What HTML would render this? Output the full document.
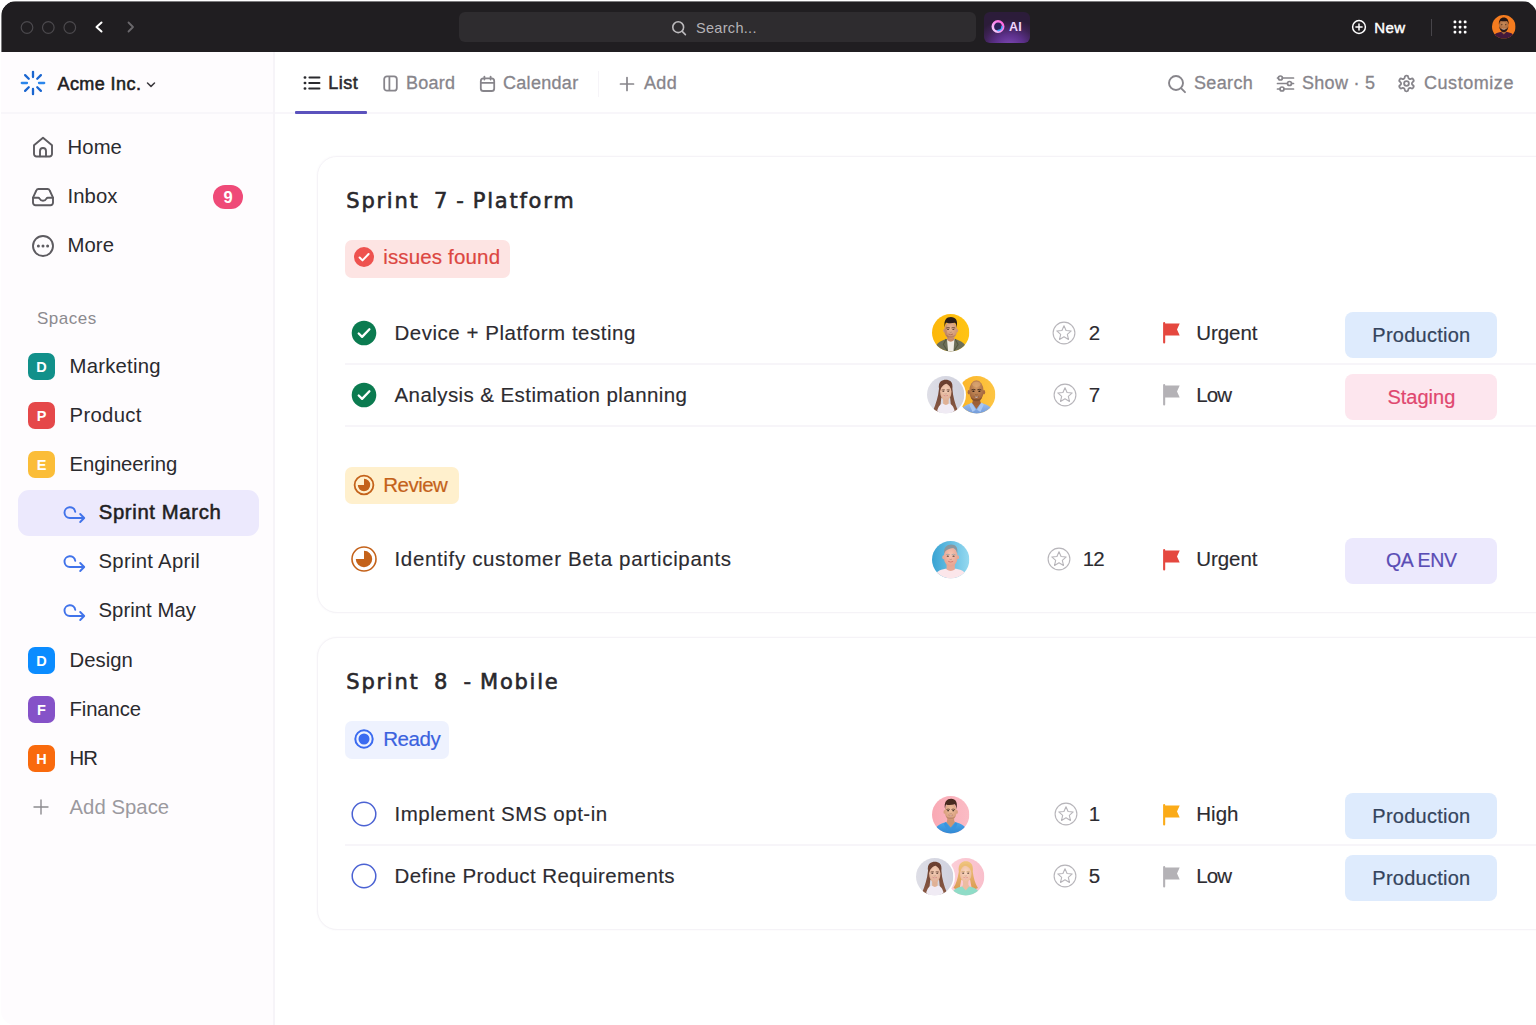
<!DOCTYPE html>
<html lang="en">
<head>
<meta charset="utf-8">
<title>Acme Inc. - Sprint March</title>
<style>
*{box-sizing:border-box;margin:0;padding:0}
html,body{width:1536px;height:1025px;overflow:hidden;background:#fff}
body{font-family:"Liberation Sans",sans-serif;color:#2a2a2e;position:relative}
.abs{position:absolute}
svg{display:block;overflow:visible}
#win{position:absolute;left:1px;top:1px;width:1540px;height:1024px;border-radius:15px 0 0 14px;overflow:hidden;background:#fff}
#winclip{position:absolute;left:0;top:0;width:1536px;height:60px;border-radius:15px 15px 0 0;overflow:hidden}
#topbar{position:absolute;left:0;top:0;width:1536px;height:51px;background:#201e21}
.t{position:absolute;white-space:pre;line-height:1}
/* top bar */
#search{position:absolute;left:458.300px;top:11.300px;width:517px;height:29.700px;border-radius:6px;background:#2e2c2f}
#ai{position:absolute;left:983px;top:11px;width:46px;height:30.500px;border-radius:6px;background:radial-gradient(ellipse 75% 85% at 55% 108%,#7c47b3 0%,#5c308a 42%,#3d2254 75%,#2c1c3a 100%)}
/* toolbar */
#toolbar{position:absolute;left:0;top:51px;width:1536px;height:62px;background:#fff;border-bottom:2px solid #f8f6fa}
#sidebar{position:absolute;left:0;top:51px;width:274px;height:980px;background:#fefcfe;border-right:2px solid #f6f4f8}
#sidehead{position:absolute;left:0;top:0;width:272px;height:62px;border-bottom:2px solid #f8f6fa}
.sb{-webkit-text-stroke:.55px currentColor}
.tb{font-size:18px;color:#87858b;letter-spacing:.35px;-webkit-text-stroke:.3px #87858b}
.nav{font-size:20.300px;color:#2a2a2e;letter-spacing:.1px}
.sq{position:absolute;left:27px;width:27px;height:27px;border-radius:7px;color:#fff;font-weight:700;font-size:14.500px;text-align:center;line-height:28.500px}
.card{position:absolute;left:316px;width:1300px;border:1px solid #f5f3f7;border-radius:20px;background:#fff;box-shadow:0 0 2px rgba(80,60,110,.05)}
</style>
</head>
<body>
<div id="win">
 <div id="winclip"><div id="topbar">
  <!-- traffic lights -->
  <svg class="abs" style="left:0;top:0" width="160" height="51" viewBox="0 0 160 51" fill="none">
   <circle cx="26" cy="26.5" r="5.8" stroke="#4b494d" stroke-width="1.2"/>
   <circle cx="47.3" cy="26.5" r="5.8" stroke="#4b494d" stroke-width="1.2"/>
   <circle cx="68.8" cy="26.5" r="5.8" stroke="#4b494d" stroke-width="1.2"/>
   <path d="M100.5 21.5 L95.5 26 L100.5 30.5" stroke="#fff" stroke-width="2" stroke-linecap="round" stroke-linejoin="round"/>
   <path d="M127.5 21.5 L132 26 L127.5 30.5" stroke="#6a686c" stroke-width="1.8" stroke-linecap="round" stroke-linejoin="round"/>
  </svg>
  <div id="edge" class="abs" style="left:0;top:0;width:1536px;height:1px;background:rgba(255,255,255,.42)"></div><div class="abs" style="left:0;top:0;width:1px;height:51px;background:rgba(255,255,255,.42)"></div>
  <div id="search"></div>
  <svg class="abs" style="left:670px;top:19px" width="16" height="16" viewBox="0 0 16 16" fill="none"><circle cx="7.2" cy="7.2" r="5.4" stroke="#bcbabd" stroke-width="1.6"/><path d="M11.2 11.4 L14.4 14.6" stroke="#bcbabd" stroke-width="1.6" stroke-linecap="round"/></svg>
  <div class="t" style="left:695px;top:20px;font-size:14.5px;color:#b4b2b6;letter-spacing:.3px">Search...</div>
  <div id="ai"></div>
  <svg class="abs" style="left:989px;top:18.400px" width="16" height="16" viewBox="0 0 16 16" fill="none">
   <defs><linearGradient id="aig" x1="0" y1="1" x2="1" y2="0"><stop offset="0" stop-color="#f5d9ff"/><stop offset=".5" stop-color="#fb8bf0"/><stop offset="1" stop-color="#ff5fd9"/></linearGradient></defs>
   <circle cx="8" cy="7.5" r="5.2" fill="#2b1f58" stroke="url(#aig)" stroke-width="2.6"/><path d="M8 11.6 A4.2 4.2 0 0 0 12.1 7.5" stroke="#3fa8ff" stroke-width="1.6" stroke-linecap="round"/>
  </svg>
  <div class="t" style="left:1008px;top:19.600px;font-size:12.500px;font-weight:700;color:#f0d6fb;letter-spacing:.3px">AI</div>
  <!-- New -->
  <svg class="abs" style="left:1350px;top:18px" width="16" height="16" viewBox="0 0 16 16" fill="none"><circle cx="8" cy="8" r="6.4" stroke="#fff" stroke-width="1.5"/><path d="M8 4.9v6.2M4.9 8h6.2" stroke="#fff" stroke-width="1.5" stroke-linecap="round"/></svg>
  <div class="t sb" style="left:1373.300px;top:18.500px;font-size:15px;color:#fff;letter-spacing:.35px;-webkit-text-stroke-width:.45px">New</div>
  <div class="abs" style="left:1430px;top:18px;width:1px;height:17px;background:#47454a"></div>
  <svg class="abs" style="left:1452px;top:19px" width="15" height="15" viewBox="0 0 15 15" fill="#fff"><g><rect x="0.6" y="0.6" width="2.7" height="2.7" rx=".9"/><rect x="5.7" y="0.6" width="2.7" height="2.7" rx=".9"/><rect x="10.8" y="0.6" width="2.7" height="2.7" rx=".9"/><rect x="0.6" y="5.7" width="2.7" height="2.7" rx=".9"/><rect x="5.7" y="5.7" width="2.7" height="2.7" rx=".9"/><rect x="10.8" y="5.7" width="2.7" height="2.7" rx=".9"/><rect x="0.6" y="10.8" width="2.7" height="2.7" rx=".9"/><rect x="5.7" y="10.8" width="2.7" height="2.7" rx=".9"/><rect x="10.8" y="10.8" width="2.7" height="2.7" rx=".9"/></g></svg>
  <!-- user avatar -->
  <svg class="abs" style="left:1491.300px;top:14.400px" width="23.600" height="23.600" viewBox="0 0 24 24">
   <defs><clipPath id="uc"><circle cx="12" cy="12" r="12"/></clipPath><radialGradient id="us" cx="50%" cy="35%" r="65%"><stop offset="0" stop-color="#c98a58"/><stop offset="1" stop-color="#a0633a"/></radialGradient></defs>
   <g clip-path="url(#uc)"><rect width="24" height="24" fill="#f57c1f"/><path d="M1 24c.5-5 4.500-7 11-7s10.500 2 11 7z" fill="#43193b"/><path d="M9.600 14v3.600l2.400 2.200 2.400-2.200V14z" fill="#a0633a"/><ellipse cx="12" cy="10.800" rx="4.700" ry="6.200" fill="url(#us)"/><path d="M7.100 10c-.6-4.800 1.900-7.400 4.900-7.400s5.500 2.600 4.900 7.400c-.4-2.300-1-3.400-1.900-4-1.800.5-4.200.5-6 0-.9.600-1.500 1.700-1.900 4z" fill="#241614"/><path d="M7.400 11.500c.3 4 2.300 5.900 4.600 5.900s4.300-1.900 4.600-5.900c-.8 2.300-1.700 3-2.600 3-.9-.5-3.100-.5-4 0-.9 0-1.800-.7-2.600-3z" fill="#2c1a16"/><ellipse cx="10" cy="9.900" rx=".75" ry=".5" fill="#1d1210"/><ellipse cx="14" cy="9.900" rx=".75" ry=".5" fill="#1d1210"/><path d="M10.700 14.400q1.300.7 2.600 0" stroke="#f1e1d8" stroke-width=".7" fill="none" stroke-linecap="round"/></g>
  </svg>
 </div></div>

 <!-- toolbar -->
 <div id="toolbar"></div>
 <div id="sidebar">
  <div id="sidehead"></div>
 </div>
 <!-- workspace header -->
 <svg class="abs" style="left:19.100px;top:69.300px" width="26" height="26" viewBox="-13 -13 26 26" fill="none" stroke-linecap="round" stroke-width="2.300">
  <path d="M0 -6V-11.200" stroke="#1a66d0"/><path d="M0 6V11.200" stroke="#1a66d0"/>
  <path d="M-6 0H-11.200" stroke="#2b86ec"/><path d="M6 0H11.200" stroke="#2b86ec"/>
  <path d="M4.250 -4.250L7.900 -7.900" stroke="#1a66d0"/><path d="M-4.250 4.250L-7.900 7.900" stroke="#1a66d0"/>
  <path d="M-4.250 -4.250L-7.900 -7.900" stroke="#1a66d0"/><path d="M4.250 4.250L7.900 7.900" stroke="#1a66d0"/>
 </svg>
 <div class="t sb" style="left:56.500px;top:74.400px;font-size:18px;color:#1f1e22;letter-spacing:.42px">Acme Inc.</div>
 <svg class="abs" style="left:144px;top:79px" width="12" height="10" viewBox="0 0 12 10" fill="none"><path d="M2.500 3L6 6.400L9.500 3" stroke="#3a383d" stroke-width="1.5" stroke-linecap="round" stroke-linejoin="round"/></svg>

 <!-- view tabs -->
 <svg class="abs" style="left:302px;top:74px" width="18" height="16" viewBox="0 0 18 16" fill="none" stroke="#2a2a2e" stroke-width="1.900" stroke-linecap="round"><path d="M6.400 2.500H16.500M6.200 8H16.500M6.200 13.500H16.500"/><path d="M1.900 2.500H2.100M1.900 8H2.100M1.900 13.500H2.100" stroke-width="2.700"/></svg>
 <div class="t sb" style="left:327.300px;top:72.600px;font-size:18px;color:#2a2a2e;letter-spacing:.5px">List</div>
 <div class="abs" style="left:294px;top:110px;width:72px;height:2.600px;background:#5b52bd;border-radius:1px"></div>
 <svg class="abs" style="left:381px;top:74px" width="17" height="17" viewBox="0 0 17 17" fill="none" stroke="#87858b" stroke-width="1.800" stroke-linejoin="round"><rect x="2.200" y="1.300" width="12.600" height="14.400" rx="2.800"/><path d="M7.400 1.300V15.700"/></svg>
 <div class="t tb" style="left:405px;top:72.600px;letter-spacing:.25px">Board</div>
 <svg class="abs" style="left:478px;top:73.500px" width="17" height="18" viewBox="0 0 17 18" fill="none" stroke="#87858b" stroke-width="1.800" stroke-linecap="round" stroke-linejoin="round"><rect x="1.800" y="3.400" width="13.400" height="12.600" rx="2.600"/><path d="M1.800 7.800H15.200M5.400 1.600V4.600M11.600 1.600V4.600"/></svg>
 <div class="t tb" style="left:502px;top:72.600px;letter-spacing:.3px">Calendar</div>
 <div class="abs" style="left:597px;top:70px;width:1px;height:26px;background:#f6f4f8"></div>
 <svg class="abs" style="left:618px;top:75px" width="16" height="16" viewBox="0 0 16 16" fill="none" stroke="#87858b" stroke-width="1.700" stroke-linecap="round"><path d="M8 1.500V14.500M1.500 8H14.500"/></svg>
 <div class="t tb" style="left:643px;top:72.600px">Add</div>

 <svg class="abs" style="left:1166px;top:73px" width="20" height="20" viewBox="0 0 20 20" fill="none" stroke="#87858b" stroke-width="1.900" stroke-linecap="round"><circle cx="9" cy="9" r="7"/><path d="M14.200 14.400L18 18.200"/></svg>
 <div class="t tb" style="left:1193px;top:72.600px">Search</div>
 <svg class="abs" style="left:1275px;top:74px" width="19" height="17" viewBox="0 0 19 17" fill="none" stroke="#87858b" stroke-width="1.700" stroke-linecap="round"><path d="M1.500 3H2.300M6.500 3H17.500M1.500 8.500H11.300M15.700 8.500H17.500M1.500 14H3.800M8.200 14H17.500"/><circle cx="4.400" cy="3" r="2"/><circle cx="13.500" cy="8.500" r="2"/><circle cx="6" cy="14" r="2"/></svg>
 <div class="t tb" style="left:1301px;top:72.600px;letter-spacing:.3px">Show · 5</div>
 <svg class="abs" style="left:1396px;top:73px" width="19" height="19" viewBox="0 0 24 24" fill="none" stroke="#87858b" stroke-width="2.300" stroke-linecap="round" stroke-linejoin="round"><path d="M12.220 2h-.44a2 2 0 0 0-2 2v.18a2 2 0 0 1-1 1.730l-.43.250a2 2 0 0 1-2 0l-.15-.08a2 2 0 0 0-2.730.73l-.22.380a2 2 0 0 0 .73 2.730l.15.100a2 2 0 0 1 1 1.720v.51a2 2 0 0 1-1 1.740l-.15.090a2 2 0 0 0-.73 2.730l.22.380a2 2 0 0 0 2.730.730l.15-.08a2 2 0 0 1 2 0l.43.250a2 2 0 0 1 1 1.730V20a2 2 0 0 0 2 2h.44a2 2 0 0 0 2-2v-.18a2 2 0 0 1 1-1.730l.43-.25a2 2 0 0 1 2 0l.15.080a2 2 0 0 0 2.730-.73l.22-.39a2 2 0 0 0-.73-2.730l-.15-.08a2 2 0 0 1-1-1.740v-.5a2 2 0 0 1 1-1.740l.15-.09a2 2 0 0 0 .73-2.730l-.22-.38a2 2 0 0 0-2.730-.730l-.15.080a2 2 0 0 1-2 0l-.43-.250a2 2 0 0 1-1-1.730V4a2 2 0 0 0-2-2z"/><circle cx="12" cy="12" r="3"/></svg>
 <div class="t tb" style="left:1423px;top:72.600px;letter-spacing:.55px">Customize</div>

 <!-- sidebar nav -->
 <svg class="abs" style="left:30px;top:134px" width="24" height="24" viewBox="0 0 24 24" fill="none" stroke="#5d5b60" stroke-width="1.900" stroke-linejoin="round" stroke-linecap="round"><path d="M3 10.200L12 2.800l9 7.400V19a2.500 2.500 0 0 1-2.500 2.500h-13A2.500 2.500 0 0 1 3 19z"/><path d="M9 21.300v-5.300a3 3 0 0 1 6 0v5.300"/></svg>
 <div class="t nav" style="left:66.5px;top:135.9px">Home</div>
 <svg class="abs" style="left:30px;top:184px" width="24" height="24" viewBox="0 0 24 24" fill="none" stroke="#5d5b60" stroke-width="1.900" stroke-linejoin="round" stroke-linecap="round"><path d="M2 12.600l3.300-7.100A2.400 2.400 0 0 1 7.500 4h9a2.400 2.400 0 0 1 2.200 1.500L22 12.600v5.100A2.500 2.500 0 0 1 19.500 20.200h-15A2.500 2.500 0 0 1 2 17.700z"/><path d="M2 12.800h5.300c.6 0 1 .4 1.300 .9a3.800 3.800 0 0 0 6.800 0c.3-.5 .7-.9 1.300-.9H22"/></svg>
 <div class="t nav" style="left:66.5px;top:184.9px">Inbox</div>
 <div class="abs" style="left:212px;top:184px;width:30px;height:24px;border-radius:12px;background:#ef4a78;color:#fff;font-size:16.500px;font-weight:700;text-align:center;line-height:24.500px">9</div>
 <svg class="abs" style="left:30px;top:233px" width="24" height="24" viewBox="0 0 24 24" fill="none" stroke="#5d5b60" stroke-width="1.900"><circle cx="12" cy="12" r="10"/><g fill="#5d5b60" stroke="none"><circle cx="7.400" cy="12" r="1.500"/><circle cx="12" cy="12" r="1.500"/><circle cx="16.600" cy="12" r="1.500"/></g></svg>
 <div class="t nav" style="left:66.5px;top:233.9px">More</div>

 <div class="t" style="left:36px;top:308.900px;font-size:17px;color:#8c8a8f;letter-spacing:.5px">Spaces</div>

 <div class="sq" style="top:352px;background:#11908a">D</div>
 <div class="t nav" style="left:68.5px;top:355.4px;letter-spacing:.25px">Marketing</div>
 <div class="sq" style="top:401px;background:#e5484a">P</div>
 <div class="t nav" style="left:68.5px;top:404.4px;letter-spacing:.35px">Product</div>
 <div class="sq" style="top:450px;background:#fbbd38">E</div>
 <div class="t nav" style="left:68.5px;top:453.4px;letter-spacing:-.05px">Engineering</div>

 <div class="abs" style="left:17px;top:489px;width:241px;height:46px;border-radius:11px;background:#ece9fd"></div>
 <svg class="abs spr" style="left:62px;top:503.3px" width="23" height="20" viewBox="0 0 23 20" fill="none" stroke="#4173ea" stroke-width="1.900" stroke-linecap="round" stroke-linejoin="round"><path d="M12.600 14H6.900a5.400 5.400 0 1 1 5.350-6.200"/><path d="M11 14h9.600M17.200 10l4 4-4 4"/></svg>
 <div class="t nav sb" style="left:97.8px;top:501.4px;color:#1f1e22;letter-spacing:.63px">Sprint March</div>
 <svg class="abs spr" style="left:62px;top:552.3px" width="23" height="20" viewBox="0 0 23 20" fill="none" stroke="#4173ea" stroke-width="1.900" stroke-linecap="round" stroke-linejoin="round"><path d="M12.600 14H6.900a5.400 5.400 0 1 1 5.350-6.200"/><path d="M11 14h9.600M17.200 10l4 4-4 4"/></svg>
 <div class="t nav" style="left:97.5px;top:550.4px;letter-spacing:.3px">Sprint April</div>
 <svg class="abs spr" style="left:62px;top:601.3px" width="23" height="20" viewBox="0 0 23 20" fill="none" stroke="#4173ea" stroke-width="1.900" stroke-linecap="round" stroke-linejoin="round"><path d="M12.600 14H6.900a5.400 5.400 0 1 1 5.350-6.200"/><path d="M11 14h9.600M17.200 10l4 4-4 4"/></svg>
 <div class="t nav" style="left:97.5px;top:599.4px;letter-spacing:.05px">Sprint May</div>

 <div class="sq" style="top:646px;background:#0b8cff">D</div>
 <div class="t nav" style="left:68.5px;top:649.4px;letter-spacing:.05px">Design</div>
 <div class="sq" style="top:695px;background:#8552c8">F</div>
 <div class="t nav" style="left:68.5px;top:698.4px;letter-spacing:-.1px">Finance</div>
 <div class="sq" style="top:744px;background:#f96a0d">H</div>
 <div class="t nav" style="left:68.5px;top:747.4px;letter-spacing:-.9px">HR</div>
 <svg class="abs" style="left:32px;top:798px" width="16" height="16" viewBox="0 0 16 16" fill="none" stroke="#8c8a8f" stroke-width="1.400" stroke-linecap="round"><path d="M8 1V15M1 8H15"/></svg>
 <div class="t nav" style="left:68.5px;top:795.9px;color:#9b999e;letter-spacing:.05px">Add Space</div>

 <!--MAIN-->
 <div class="card" style="top:155.3px;height:457.2px"></div>
 <div class="t" style="left:345.3px;top:189.69px;font-size:21px;font-family:'DejaVu Sans',sans-serif;color:#29282c;letter-spacing:1.75px;-webkit-text-stroke:.6px #29282c;word-spacing:-1.2px;">Sprint  7 - Platform</div>
 <div class="abs" style="left:344px;top:239px;width:165px;height:37.5px;border-radius:7px;background:#fde4e3"></div>
 <svg class="abs" style="left:352px;top:245.4px" width="22" height="22" viewBox="-11 -11 22 22" ><circle r="10" fill="#ee524f"/><path d="M-4.400 .500L-1.500 3.400L4.600 -3" stroke="#fff" stroke-width="2" fill="none" stroke-linecap="round" stroke-linejoin="round"/></svg>
 <div class="t" style="left:382.2px;top:246.4px;font-size:20.5px;color:#dc4641;letter-spacing:0.16px;-webkit-text-stroke:.2px #dc4641;">issues found</div>
 <svg class="abs" style="left:349.5px;top:318.7px" width="26" height="26" viewBox="-13 -13 26 26" ><circle r="12.3" fill="#0b7b50"/><path d="M-5.300 .500L-1.900 3.900L5.400 -3.700" stroke="#fff" stroke-width="2.300" fill="none" stroke-linecap="round" stroke-linejoin="round"/></svg>
 <div class="t" style="left:393.5px;top:321.55px;font-size:20.5px;color:#2c2b30;letter-spacing:0.52px;-webkit-text-stroke:.15px #2c2b30;">Device + Platform testing</div>
 <svg class="abs" style="left:930.6px;top:312.7px" width="37.4" height="37.4" viewBox="-19 -19 38 38"><defs><clipPath id="av1"><circle cx="0" cy="0" r="19"/></clipPath><radialGradient id="av1s" cx="50%" cy="40%" r="65%"><stop offset="0" stop-color="#e6b593"/><stop offset="1" stop-color="#c98f6c"/></radialGradient><linearGradient id="av1b" x1="0" y1="0" x2="1" y2="0"><stop offset="0" stop-color="#fdb70a"/><stop offset="1" stop-color="#ffc414"/></linearGradient></defs><g clip-path="url(#av1)"><rect x="-19" y="-19" width="38" height="38" fill="url(#av1b)"/><path d="M-18 20C-17 12-10.500 8-4.500 6.300L4.500 6.300C10.500 8 17 12 18 20z" fill="#6d6f59"/><path d="M-4.600 6.300L-7.500 12L-3 19M4.600 6.300L7.500 12L3 19" stroke="#55583f" stroke-width="1.100" fill="none"/><path d="M-3.800 6.500L-2.600 19H2.800L3.800 6.500z" fill="#f1eee6"/><path d="M-3.600 2V7.500Q0 11 3.600 7.500V2z" fill="#c58a68"/><ellipse cx="-6.500" cy="-2.200" rx="1.100" ry="1.900" fill="#d09a78"/><ellipse cx="6.500" cy="-2.200" rx="1.100" ry="1.900" fill="#d09a78"/><ellipse cx="0" cy="-2.600" rx="6.500" ry="8.900" fill="url(#av1s)"/><path d="M-6.500 -2.600A6.500 8.900 0 0 0 -1 6.200C-3.500 3-4.500 -3-4 -9z" fill="#8a5236" opacity=".22"/><path d="M-6 -5C-7.500 -13-4.200 -16 .2 -16C5 -16 7.600 -12.600 6.100 -5C5.900 -8 5.300 -9.400 4.400 -10.200C1 -9.500-3 -9.600-4.800 -10.200C-5.600 -9-5.900 -7.500-6 -5z" fill="#2b1e19"/><ellipse cx="-2.7" cy="-3.5" rx="1.05" ry="0.62" fill="#3b2a24"/><ellipse cx="2.7" cy="-3.5" rx="1.05" ry="0.62" fill="#3b2a24"/><path d="M-4.2 -4.9Q-2.7 -5.7 -1.2 -5M1.2 -5Q2.7 -5.7 4.2 -4.9" stroke="#4a3228" stroke-width="0.75" fill="none" stroke-linecap="round"/><path d="M-0.9 -0.5Q0 0.1 0.9 -0.5" stroke="#000" stroke-opacity="0.25" stroke-width="0.6" fill="none" stroke-linecap="round"/><path d="M-2 1.6Q0 2.8 2 1.6" stroke="#a8644f" stroke-width="0.8" fill="none" stroke-linecap="round"/><path d="M-5.600 1C-4 6.500 4 6.500 5.600 1C4.500 4-4.500 4-5.600 1z" fill="#7a4a36" opacity=".28"/></g></svg>
 <svg class="abs" style="left:1051.2px;top:319.5px" width="24" height="24" viewBox="-12 -12 24 24" fill="none"><circle r="10.900" stroke="#b7b5ba" stroke-width="1.100"/><path d="M0 -7.6L2.06 -2.83L7.23 -2.35L3.33 1.08L4.47 6.15L0 3.5L-4.47 6.15L-3.33 1.08L-7.23 -2.35L-2.06 -2.83z" stroke="#b7b5ba" stroke-width="1.100" stroke-linejoin="round" transform="translate(0 .3)"/></svg>
 <div class="t" style="left:1087.7px;top:321.55px;font-size:20.5px;color:#2c2b30;-webkit-text-stroke:.15px #2c2b30;">2</div>
 <svg class="abs" style="left:1162px;top:321.2px" width="18" height="22" viewBox="0 0 18 22" ><path d="M1.150 1V20.400" stroke="#e5483f" stroke-width="2.100" stroke-linecap="round"/><path d="M1.800 1.500H16.700L14 7.550L16.700 13.600H1.800z" fill="#e5483f"/></svg>
 <div class="t" style="left:1195.3px;top:321.55px;font-size:20.5px;color:#2c2b30;letter-spacing:-0.08px;-webkit-text-stroke:.15px #2c2b30;">Urgent</div>
 <div class="abs" style="left:1344.4px;top:310.7px;width:152px;height:46px;border-radius:8px;background:#deebfd"></div>
 <div class="t" style="left:1344.4px;width:152px;text-align:center;top:323.94px;font-size:20px;color:#34445c;letter-spacing:0.25px;-webkit-text-stroke:.2px #34445c">Production</div>
 <svg class="abs" style="left:349.5px;top:380.7px" width="26" height="26" viewBox="-13 -13 26 26" ><circle r="12.3" fill="#0b7b50"/><path d="M-5.300 .500L-1.900 3.900L5.400 -3.700" stroke="#fff" stroke-width="2.300" fill="none" stroke-linecap="round" stroke-linejoin="round"/></svg>
 <div class="t" style="left:393.5px;top:383.55px;font-size:20.5px;color:#2c2b30;letter-spacing:0.42px;-webkit-text-stroke:.15px #2c2b30;">Analysis &amp; Estimation planning</div>
 <svg class="abs" style="left:957.1px;top:374.7px" width="37.4" height="37.4" viewBox="-19 -19 38 38"><defs><clipPath id="av2"><circle cx="0" cy="0" r="19"/></clipPath><radialGradient id="av2s" cx="50%" cy="30%" r="70%"><stop offset="0" stop-color="#d49c68"/><stop offset="1" stop-color="#9c5f36"/></radialGradient><linearGradient id="av2b" x1="0" y1="0" x2="1" y2="0"><stop offset="0" stop-color="#fcb526"/><stop offset="1" stop-color="#fdc544"/></linearGradient><linearGradient id="av2c" x1="0" y1="0" x2="0" y2="1"><stop offset="0" stop-color="#9bbdee"/><stop offset="1" stop-color="#6f98d8"/></linearGradient></defs><g clip-path="url(#av2)"><rect x="-19" y="-19" width="38" height="38" fill="url(#av2b)"/><path d="M-18 20C-17 13-11 10-5 8.600H5C11 10 17 13 18 20z" fill="url(#av2c)"/><path d="M-4.600 8.400L-.3 14.500L4.200 8.400L3 6H-3.400z" fill="#a2643c"/><path d="M-5.400 8L-1 15.200L-4.200 17.500L-7.600 10zM5 8L.4 15.200L3.800 17.500L7.200 10z" fill="#a9c7f2"/><path d="M-4 3V9Q-.3 12 3.600 9V3z" fill="#9c5f38"/><ellipse cx="-8" cy="-2.500" rx="1.200" ry="2.200" fill="#a8683f"/><ellipse cx="7.400" cy="-2.500" rx="1.200" ry="2.200" fill="#a8683f"/><ellipse cx="-.3" cy="-3.600" rx="7.300" ry="11" fill="url(#av2s)"/><ellipse cx="-.3" cy="-10.500" rx="4.200" ry="2.600" fill="#e0ad78" opacity=".55"/><ellipse cx="-3.32" cy="-3.46" rx="1.18" ry="0.69" fill="#2e1c14"/><ellipse cx="2.72" cy="-3.46" rx="1.18" ry="0.69" fill="#2e1c14"/><path d="M-5 -5.02Q-3.32 -5.92 -1.64 -5.14M1.04 -5.14Q2.72 -5.92 4.4 -5.02" stroke="#3a2318" stroke-width="0.84" fill="none" stroke-linecap="round"/><path d="M-1.31 -0.1Q-0.3 0.58 0.71 -0.1" stroke="#000" stroke-opacity="0.25" stroke-width="0.67" fill="none" stroke-linecap="round"/><path d="M-2.88 1.7Q-0.3 2.7 2.28 1.7Q-0.3 4.94 -2.88 1.7z" fill="#fff8f4" stroke="#7a4630" stroke-width="0.5"/><path d="M-6.300 1.500C-5 8.500 4.400 8.500 5.700 1.500C4.500 5.500-5 5.500-6.300 1.500z" fill="#4a2a18" opacity=".35"/></g></svg>
 <svg class="abs" style="left:926px;top:374.7px" width="37.4" height="37.4" viewBox="-19 -19 38 38"><defs><clipPath id="av3"><circle cx="0" cy="0" r="19"/></clipPath><radialGradient id="av3s" cx="50%" cy="40%" r="65%"><stop offset="0" stop-color="#f3cdb6"/><stop offset="1" stop-color="#dfae93"/></radialGradient><linearGradient id="av3b" x1="0" y1="0" x2="1" y2="0"><stop offset="0" stop-color="#dedee6"/><stop offset="1" stop-color="#cfd1de"/></linearGradient><linearGradient id="av3h" x1="0" y1="0" x2="0" y2="1"><stop offset="0" stop-color="#6a3f30"/><stop offset="1" stop-color="#8a5a44"/></linearGradient></defs><circle cx="0" cy="0" r="20.6" fill="#fff"/><g clip-path="url(#av3)"><rect x="-19" y="-19" width="38" height="38" fill="url(#av3b)"/><path d="M-6.800 -6C-8 -13.500-3.500 -15.300 0 -15.300C4 -15.300 7.800 -13.500 6.800 -6C7.400 2 9.500 10 12.600 16.500L6 18L4.500 3H-4.500L-6 18L-13 16.500C-10 10-7.600 2-6.800 -6z" fill="url(#av3h)"/><path d="M-9 20C-8.700 12.800-6 10-3 9H3.400C6.500 10 9 12.800 9.400 20z" fill="#f0ebf4"/><path d="M-2.600 3.500V9.200Q.2 11.500 3 9.200V3.500z" fill="#e0b195"/><ellipse cx=".1" cy="-3.200" rx="5.800" ry="9.200" fill="url(#av3s)"/><path d="M-6 -3C-6.500 -10.500-3 -13.300 .5 -13.300C4 -13.300 6.500 -10.500 6.100 -3C5.300 -7.500 3.500 -10 1 -11.200C-2 -10.500-5 -8-6 -3z" fill="#6a3f30"/><ellipse cx="-2.38" cy="-3.6" rx="0.97" ry="0.57" fill="#4a3027"/><ellipse cx="2.58" cy="-3.6" rx="0.97" ry="0.57" fill="#4a3027"/><path d="M-3.76 -4.88Q-2.38 -5.62 -1 -4.98M1.2 -4.98Q2.58 -5.62 3.96 -4.88" stroke="#6a4434" stroke-width="0.69" fill="none" stroke-linecap="round"/><path d="M-0.73 -0.84Q0.1 -0.28 0.93 -0.84" stroke="#000" stroke-opacity="0.25" stroke-width="0.55" fill="none" stroke-linecap="round"/><path d="M-2.02 0.64Q0.1 1.46 2.22 0.64Q0.1 3.3 -2.02 0.64z" fill="#fff8f4" stroke="#c9675f" stroke-width="0.41"/></g></svg>
 <svg class="abs" style="left:1052.2px;top:381.5px" width="24" height="24" viewBox="-12 -12 24 24" fill="none"><circle r="10.900" stroke="#b7b5ba" stroke-width="1.100"/><path d="M0 -7.6L2.06 -2.83L7.23 -2.35L3.33 1.08L4.47 6.15L0 3.5L-4.47 6.15L-3.33 1.08L-7.23 -2.35L-2.06 -2.83z" stroke="#b7b5ba" stroke-width="1.100" stroke-linejoin="round" transform="translate(0 .3)"/></svg>
 <div class="t" style="left:1087.7px;top:383.55px;font-size:20.5px;color:#2c2b30;-webkit-text-stroke:.15px #2c2b30;">7</div>
 <svg class="abs" style="left:1162px;top:383.2px" width="18" height="22" viewBox="0 0 18 22" ><path d="M1.150 1V20.400" stroke="#b4b2b6" stroke-width="2.100" stroke-linecap="round"/><path d="M1.800 1.500H16.700L14 7.550L16.700 13.600H1.800z" fill="#b4b2b6"/></svg>
 <div class="t" style="left:1195.3px;top:383.55px;font-size:20.5px;color:#2c2b30;letter-spacing:-0.9px;-webkit-text-stroke:.15px #2c2b30;">Low</div>
 <div class="abs" style="left:1344.4px;top:372.7px;width:152px;height:46px;border-radius:8px;background:#fde6ee"></div>
 <div class="t" style="left:1344.4px;width:152px;text-align:center;top:385.94px;font-size:20px;color:#e0476f;letter-spacing:0px;-webkit-text-stroke:.2px #e0476f">Staging</div>
 <div class="abs" style="left:344px;top:362px;width:1300px;height:2px;background:#f7f5f9"></div>
 <div class="abs" style="left:344px;top:424px;width:1300px;height:2px;background:#f7f5f9"></div>
 <div class="abs" style="left:344px;top:465.5px;width:113.5px;height:37.5px;border-radius:7px;background:#fff0cd"></div>
 <svg class="abs" style="left:350px;top:470.7px" width="26" height="26" viewBox="-13 -13 26 26" ><circle r="9.4" fill="none" stroke="#c4621a" stroke-width="1.8"/><path d="M0 0L0 -6.2A6.2 6.2 0 1 1 -6.2 0z" fill="#c4621a"/></svg>
 <div class="t" style="left:382.2px;top:473.6px;font-size:20.5px;color:#c4621a;letter-spacing:-0.5px;-webkit-text-stroke:.2px #c4621a;">Review</div>
 <svg class="abs" style="left:349.5px;top:545.3px" width="26" height="26" viewBox="-13 -13 26 26" ><circle r="12" fill="none" stroke="#c4621a" stroke-width="1.6"/><path d="M0 0L0 -8.2A8.2 8.2 0 1 1 -8.2 0z" fill="#c4621a"/></svg>
 <div class="t" style="left:393.5px;top:547.85px;font-size:20.5px;color:#2c2b30;letter-spacing:0.65px;-webkit-text-stroke:.15px #2c2b30;">Identify customer Beta participants</div>
 <svg class="abs" style="left:930.7px;top:539.6px" width="37.4" height="37.4" viewBox="-19 -19 38 38"><defs><clipPath id="av4"><circle cx="0" cy="0" r="19"/></clipPath><linearGradient id="av4g" x1="0" y1="0" x2="1" y2="0"><stop offset="0" stop-color="#38a3d3"/><stop offset="1" stop-color="#95d9f0"/></linearGradient><radialGradient id="av4s" cx="50%" cy="40%" r="65%"><stop offset="0" stop-color="#f7c6b4"/><stop offset="1" stop-color="#e6a08c"/></radialGradient></defs><g clip-path="url(#av4)"><rect x="-19" y="-19" width="38" height="38" fill="url(#av4g)"/><path d="M-18 20C-17 12.800-11 10.300-5.500 9.300H5.500C11 10.300 17 12.800 18 20z" fill="#fbe6ea"/><path d="M-4.200 3V10Q0 13 4.200 10V3z" fill="#e7a996"/><ellipse cx="-7.300" cy="-2.500" rx="1.200" ry="2.100" fill="#eaa995"/><ellipse cx="7.300" cy="-2.500" rx="1.200" ry="2.100" fill="#eaa995"/><ellipse cx="0" cy="-3" rx="7" ry="10" fill="url(#av4s)"/><path d="M-6.600 -6C-7.600 -12.800-3.500 -15.500 0.500 -15.500C5 -15.500 7.600 -12.500 6.600 -6C6.100 -9.300 4.800 -11 2.500 -11.800C-1 -11.300-5.300 -10.300-6.600 -6z" fill="#8b979e"/><ellipse cx="-2.92" cy="-3.6" rx="1.13" ry="0.67" fill="#5a4038"/><ellipse cx="2.92" cy="-3.6" rx="1.13" ry="0.67" fill="#5a4038"/><path d="M-4.54 -5.12Q-2.92 -5.98 -1.3 -5.22M1.3 -5.22Q2.92 -5.98 4.54 -5.12" stroke="#9aa3a8" stroke-width="0.81" fill="none" stroke-linecap="round"/><path d="M-0.97 -0.36Q0 0.28 0.97 -0.36" stroke="#000" stroke-opacity="0.25" stroke-width="0.65" fill="none" stroke-linecap="round"/><path d="M-2.16 1.9Q0 3.2 2.16 1.9" stroke="#d2736a" stroke-width="0.86" fill="none" stroke-linecap="round"/></g></svg>
 <svg class="abs" style="left:1046.3px;top:545.8px" width="24" height="24" viewBox="-12 -12 24 24" fill="none"><circle r="10.900" stroke="#b7b5ba" stroke-width="1.100"/><path d="M0 -7.6L2.06 -2.83L7.23 -2.35L3.33 1.08L4.47 6.15L0 3.5L-4.47 6.15L-3.33 1.08L-7.23 -2.35L-2.06 -2.83z" stroke="#b7b5ba" stroke-width="1.100" stroke-linejoin="round" transform="translate(0 .3)"/></svg>
 <div class="t" style="left:1081.7px;top:547.85px;font-size:20.5px;color:#2c2b30;letter-spacing:-0.9px;-webkit-text-stroke:.15px #2c2b30;">12</div>
 <svg class="abs" style="left:1162px;top:547.5px" width="18" height="22" viewBox="0 0 18 22" ><path d="M1.150 1V20.400" stroke="#e5483f" stroke-width="2.100" stroke-linecap="round"/><path d="M1.800 1.500H16.700L14 7.550L16.700 13.600H1.800z" fill="#e5483f"/></svg>
 <div class="t" style="left:1195.3px;top:547.85px;font-size:20.5px;color:#2c2b30;letter-spacing:-0.08px;-webkit-text-stroke:.15px #2c2b30;">Urgent</div>
 <div class="abs" style="left:1344.4px;top:537px;width:152px;height:46px;border-radius:8px;background:#ece9fd"></div>
 <div class="t" style="left:1344.4px;width:152px;text-align:center;top:550.48px;font-size:19.5px;color:#5a4db5;letter-spacing:-0.3px;-webkit-text-stroke:.2px #5a4db5">QA ENV</div>
 <div class="card" style="top:636.3px;height:293.2px"></div>
 <div class="t" style="left:345.3px;top:671.19px;font-size:21px;font-family:'DejaVu Sans',sans-serif;color:#29282c;letter-spacing:1.75px;-webkit-text-stroke:.6px #29282c;word-spacing:-1.2px;">Sprint  8  - Mobile</div>
 <div class="abs" style="left:344px;top:720px;width:103.5px;height:37.5px;border-radius:7px;background:#eef2fe"></div>
 <svg class="abs" style="left:353px;top:727.9px" width="20" height="20" viewBox="-10 -10 20 20" ><circle r="8.700" fill="none" stroke="#3b6bf0" stroke-width="2"/><circle r="5.500" fill="#3b6bf0"/></svg>
 <div class="t" style="left:382.2px;top:727.8px;font-size:20.5px;color:#3b62de;letter-spacing:-0.42px;-webkit-text-stroke:.2px #3b62de;">Ready</div>
 <svg class="abs" style="left:349.5px;top:800.3px" width="26" height="26" viewBox="-13 -13 26 26" ><circle r="11.8" fill="#fff" stroke="#4b62d3" stroke-width="1.5"/></svg>
 <div class="t" style="left:393.5px;top:802.85px;font-size:20.5px;color:#2c2b30;letter-spacing:0.52px;-webkit-text-stroke:.15px #2c2b30;">Implement SMS opt-in</div>
 <svg class="abs" style="left:930.8px;top:794.8px" width="37.4" height="37.4" viewBox="-19 -19 38 38"><defs><clipPath id="av5"><circle cx="0" cy="0" r="19"/></clipPath><radialGradient id="av5s" cx="50%" cy="40%" r="65%"><stop offset="0" stop-color="#efbf9f"/><stop offset="1" stop-color="#d49a78"/></radialGradient><linearGradient id="av5b" x1="0" y1="0" x2="1" y2="0"><stop offset="0" stop-color="#f9a9b4"/><stop offset="1" stop-color="#fbbcc5"/></linearGradient><linearGradient id="av5c" x1="0" y1="0" x2="0" y2="1"><stop offset="0" stop-color="#4aa6ea"/><stop offset="1" stop-color="#2f86d2"/></linearGradient></defs><g clip-path="url(#av5)"><rect x="-19" y="-19" width="38" height="38" fill="url(#av5b)"/><path d="M-18 20C-17 12-10.500 9-5 7.800H5C10.500 9 17 12 18 20z" fill="url(#av5c)"/><path d="M-4.400 7.600L0 13L4.400 7.600L3 5.500H-3z" fill="#cf9573"/><path d="M-5 7.400L-.8 14L-3.800 16L-7 9.200zM5 7.400L.8 14L3.800 16L7 9.200z" fill="#3a94df"/><path d="M-3.500 2.500V8Q0 10.500 3.500 8V2.500z" fill="#cf9573"/><ellipse cx="-6.200" cy="-2.800" rx="1.100" ry="1.900" fill="#d9a07e"/><ellipse cx="6.200" cy="-2.800" rx="1.100" ry="1.900" fill="#d9a07e"/><ellipse cx="0" cy="-3.200" rx="6" ry="8.600" fill="url(#av5s)"/><path d="M-5.700 -5.500C-7.200 -13-4 -16.300 .5 -16.300C5.200 -16.300 7.400 -12.600 5.800 -5.500C5.700 -8 5.100 -9.700 4.200 -10.600C.5 -9.500-3 -9.600-4.700 -10.400C-5.300 -9.200-5.600 -7.500-5.700 -5.500z" fill="#47291f"/><ellipse cx="-2.59" cy="-4.05" rx="1.01" ry="0.6" fill="#3b2a24"/><ellipse cx="2.59" cy="-4.05" rx="1.01" ry="0.6" fill="#3b2a24"/><path d="M-4.03 -5.39Q-2.59 -6.16 -1.15 -5.49M1.15 -5.49Q2.59 -6.16 4.03 -5.39" stroke="#4a3228" stroke-width="0.72" fill="none" stroke-linecap="round"/><path d="M-0.86 -1.17Q0 -0.59 0.86 -1.17" stroke="#000" stroke-opacity="0.25" stroke-width="0.58" fill="none" stroke-linecap="round"/><path d="M-2.21 0.37Q0 1.23 2.21 0.37Q0 3.15 -2.21 0.37z" fill="#fff8f4" stroke="#a8604e" stroke-width="0.43"/><path d="M-5.300 .5C-4 6 4 6 5.300 .5C4.200 3.600-4.200 3.600-5.300 .5z" fill="#6a3c2a" opacity=".25"/></g></svg>
 <svg class="abs" style="left:1053px;top:800.8px" width="24" height="24" viewBox="-12 -12 24 24" fill="none"><circle r="10.900" stroke="#b7b5ba" stroke-width="1.100"/><path d="M0 -7.6L2.06 -2.83L7.23 -2.35L3.33 1.08L4.47 6.15L0 3.5L-4.47 6.15L-3.33 1.08L-7.23 -2.35L-2.06 -2.83z" stroke="#b7b5ba" stroke-width="1.100" stroke-linejoin="round" transform="translate(0 .3)"/></svg>
 <div class="t" style="left:1087.7px;top:802.85px;font-size:20.5px;color:#2c2b30;-webkit-text-stroke:.15px #2c2b30;">1</div>
 <svg class="abs" style="left:1162px;top:802.5px" width="18" height="22" viewBox="0 0 18 22" ><path d="M1.150 1V20.400" stroke="#fbab18" stroke-width="2.100" stroke-linecap="round"/><path d="M1.800 1.500H16.700L14 7.550L16.700 13.600H1.800z" fill="#fbab18"/></svg>
 <div class="t" style="left:1195.3px;top:802.85px;font-size:20.5px;color:#2c2b30;-webkit-text-stroke:.15px #2c2b30;">High</div>
 <div class="abs" style="left:1344.4px;top:792px;width:152px;height:46px;border-radius:8px;background:#deebfd"></div>
 <div class="t" style="left:1344.4px;width:152px;text-align:center;top:805.24px;font-size:20px;color:#34445c;letter-spacing:0.25px;-webkit-text-stroke:.2px #34445c">Production</div>
 <svg class="abs" style="left:349.5px;top:862.3px" width="26" height="26" viewBox="-13 -13 26 26" ><circle r="11.8" fill="#fff" stroke="#4b62d3" stroke-width="1.5"/></svg>
 <div class="t" style="left:393.5px;top:864.85px;font-size:20.5px;color:#2c2b30;letter-spacing:0.43px;-webkit-text-stroke:.15px #2c2b30;">Define Product Requirements</div>
 <svg class="abs" style="left:945.6px;top:856.8px" width="37.4" height="37.4" viewBox="-19 -19 38 38"><defs><clipPath id="av6"><circle cx="0" cy="0" r="19"/></clipPath><radialGradient id="av6s" cx="50%" cy="40%" r="65%"><stop offset="0" stop-color="#fad7c0"/><stop offset="1" stop-color="#ebb89c"/></radialGradient><linearGradient id="av6b" x1="0" y1="0" x2="1" y2="0"><stop offset="0" stop-color="#fcd0d9"/><stop offset="1" stop-color="#f9bfcb"/></linearGradient><linearGradient id="av6h" x1="0" y1="0" x2="0" y2="1"><stop offset="0" stop-color="#f0c57e"/><stop offset="1" stop-color="#d99a52"/></linearGradient></defs><g clip-path="url(#av6)"><rect x="-19" y="-19" width="38" height="38" fill="url(#av6b)"/><path d="M-7 -5C-8.300 -13.500-3.500 -15.800 0 -15.800C4.200 -15.800 8.300 -13.500 7.200 -5C8 1 9.500 7 12.500 11.500L6.500 14L4.500 3H-4.500L-6.500 14L-12.500 11.500C-9.500 7-8 1-7 -5z" fill="url(#av6h)"/><path d="M-15 20C-14 13.500-9 11-4 10H4C9 11 14 13.500 15 20z" fill="#8fdcc7"/><path d="M-3.800 9.800L0 14L3.800 9.800L2.600 8.500H-2.600z" fill="#ecbca0"/><path d="M-2.700 4V10Q0 12 2.700 10V4z" fill="#ecbca0"/><ellipse cx="0" cy="-3" rx="5.900" ry="8.600" fill="url(#av6s)"/><path d="M-6 -3.500C-6.500 -10.500-3 -13 0 -13C3.800 -13 6.500 -10.500 6 -3.500C5.200 -8 3 -10.500 -1 -11C-3.600 -10-5.200 -7.500-6 -3.500z" fill="#ecbd74"/><ellipse cx="-2.54" cy="-3.62" rx="0.99" ry="0.58" fill="#5a4034"/><ellipse cx="2.54" cy="-3.62" rx="0.99" ry="0.58" fill="#5a4034"/><path d="M-3.95 -4.94Q-2.54 -5.69 -1.13 -5.03M1.13 -5.03Q2.54 -5.69 3.95 -4.94" stroke="#c49a62" stroke-width="0.7" fill="none" stroke-linecap="round"/><path d="M-0.85 -0.8Q0 -0.24 0.85 -0.8" stroke="#000" stroke-opacity="0.25" stroke-width="0.56" fill="none" stroke-linecap="round"/><path d="M-2.16 0.7Q0 1.55 2.16 0.7Q0 3.43 -2.16 0.7z" fill="#fff8f4" stroke="#d9756f" stroke-width="0.42"/></g></svg>
 <svg class="abs" style="left:915.2px;top:856.8px" width="37.4" height="37.4" viewBox="-19 -19 38 38"><defs><clipPath id="av7"><circle cx="0" cy="0" r="19"/></clipPath><radialGradient id="av7s" cx="50%" cy="40%" r="65%"><stop offset="0" stop-color="#f3cdb6"/><stop offset="1" stop-color="#dfae93"/></radialGradient><linearGradient id="av7b" x1="0" y1="0" x2="1" y2="0"><stop offset="0" stop-color="#dedee6"/><stop offset="1" stop-color="#cfd1de"/></linearGradient><linearGradient id="av7h" x1="0" y1="0" x2="0" y2="1"><stop offset="0" stop-color="#6a3f30"/><stop offset="1" stop-color="#8a5a44"/></linearGradient></defs><circle cx="0" cy="0" r="20.6" fill="#fff"/><g clip-path="url(#av7)"><rect x="-19" y="-19" width="38" height="38" fill="url(#av7b)"/><path d="M-6.800 -6C-8 -13.500-3.500 -15.300 0 -15.300C4 -15.300 7.800 -13.500 6.800 -6C7.400 2 9.500 10 12.600 16.500L6 18L4.500 3H-4.500L-6 18L-13 16.500C-10 10-7.600 2-6.800 -6z" fill="url(#av7h)"/><path d="M-9 20C-8.700 12.800-6 10-3 9H3.400C6.500 10 9 12.800 9.400 20z" fill="#f0ebf4"/><path d="M-2.600 3.500V9.200Q.2 11.500 3 9.200V3.500z" fill="#e0b195"/><ellipse cx=".1" cy="-3.200" rx="5.800" ry="9.200" fill="url(#av7s)"/><path d="M-6 -3C-6.500 -10.500-3 -13.300 .5 -13.300C4 -13.300 6.500 -10.500 6.100 -3C5.300 -7.500 3.500 -10 1 -11.200C-2 -10.500-5 -8-6 -3z" fill="#6a3f30"/><ellipse cx="-2.38" cy="-3.6" rx="0.97" ry="0.57" fill="#4a3027"/><ellipse cx="2.58" cy="-3.6" rx="0.97" ry="0.57" fill="#4a3027"/><path d="M-3.76 -4.88Q-2.38 -5.62 -1 -4.98M1.2 -4.98Q2.58 -5.62 3.96 -4.88" stroke="#6a4434" stroke-width="0.69" fill="none" stroke-linecap="round"/><path d="M-0.73 -0.84Q0.1 -0.28 0.93 -0.84" stroke="#000" stroke-opacity="0.25" stroke-width="0.55" fill="none" stroke-linecap="round"/><path d="M-2.02 0.64Q0.1 1.46 2.22 0.64Q0.1 3.3 -2.02 0.64z" fill="#fff8f4" stroke="#c9675f" stroke-width="0.41"/></g></svg>
 <svg class="abs" style="left:1051.5px;top:862.8px" width="24" height="24" viewBox="-12 -12 24 24" fill="none"><circle r="10.900" stroke="#b7b5ba" stroke-width="1.100"/><path d="M0 -7.6L2.06 -2.83L7.23 -2.35L3.33 1.08L4.47 6.15L0 3.5L-4.47 6.15L-3.33 1.08L-7.23 -2.35L-2.06 -2.83z" stroke="#b7b5ba" stroke-width="1.100" stroke-linejoin="round" transform="translate(0 .3)"/></svg>
 <div class="t" style="left:1087.7px;top:864.85px;font-size:20.5px;color:#2c2b30;-webkit-text-stroke:.15px #2c2b30;">5</div>
 <svg class="abs" style="left:1162px;top:864.5px" width="18" height="22" viewBox="0 0 18 22" ><path d="M1.150 1V20.400" stroke="#b4b2b6" stroke-width="2.100" stroke-linecap="round"/><path d="M1.800 1.500H16.700L14 7.550L16.700 13.600H1.800z" fill="#b4b2b6"/></svg>
 <div class="t" style="left:1195.3px;top:864.85px;font-size:20.5px;color:#2c2b30;letter-spacing:-0.9px;-webkit-text-stroke:.15px #2c2b30;">Low</div>
 <div class="abs" style="left:1344.4px;top:854px;width:152px;height:46px;border-radius:8px;background:#deebfd"></div>
 <div class="t" style="left:1344.4px;width:152px;text-align:center;top:867.24px;font-size:20px;color:#34445c;letter-spacing:0.25px;-webkit-text-stroke:.2px #34445c">Production</div>
 <div class="abs" style="left:344px;top:843px;width:1300px;height:2px;background:#f7f5f9"></div>
 <!--/MAIN-->
</div>
</body>
</html>
